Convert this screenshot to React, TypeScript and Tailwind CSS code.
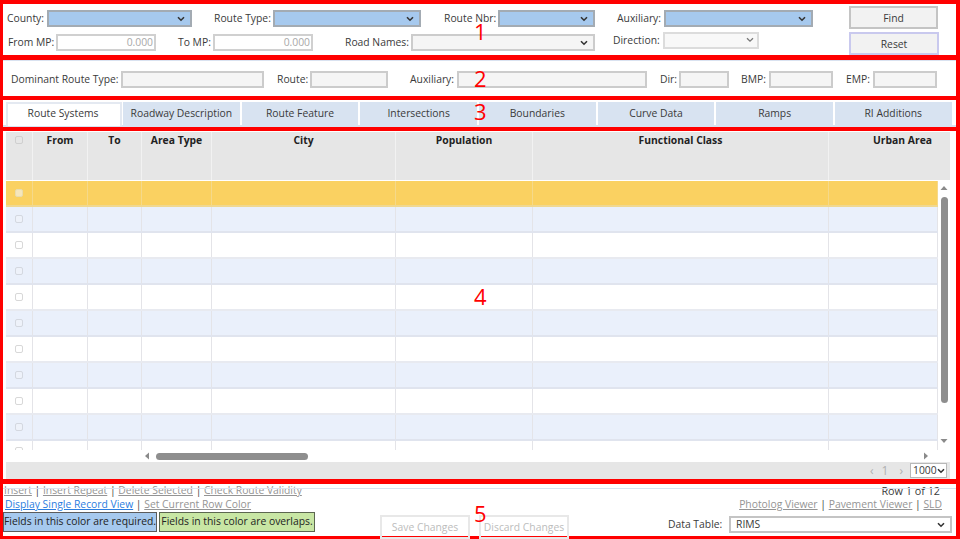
import React from "react";

const selectChevron = (
  <svg width="8" height="6" viewBox="0 0 8 6" className="shrink-0" fill="none" stroke="#333" strokeWidth="1.6">
    <path d="M1 1.2 L4 4.2 L7 1.2" />
  </svg>
);

function Sel({ cls, text }: { cls: string; text?: string }) {
  return (
    <div className={`flex items-center justify-between border px-[5px] ${cls}`}>
      <span>{text}</span>
      {selectChevron}
    </div>
  );
}

function Num({ n, cls }: { n: string; cls: string }) {
  return <span className={`absolute left-[471px] text-[22px] leading-none text-[#ff0000] ${cls}`}>{n}</span>;
}

const req = "border-[#a3abb3] bg-[#a6c9ee] h-[17px] border-2";
const box = "h-[17px] border-2 border-[#cccccc] bg-[#f5f5f5]";
const cols = ["w-[27px]", "w-[55px]", "w-[54px]", "w-[70px]", "w-[184px]", "w-[137px]", "w-[296px]", "w-[109px]"];
const headCols = ["w-[27px]", "w-[55px]", "w-[54px]", "w-[70px]", "w-[184px]", "w-[137px]", "w-[296px]", "w-[148px]"];
const heads = ["", "From", "To", "Area Type", "City", "Population", "Functional Class", "Urban Area"];
const rows = [0, 1, 2, 3, 4, 5, 6, 7, 8, 9];
const tabs = ["Roadway Description", "Route Feature", "Intersections", "Boundaries", "Curve Data", "Ramps", "RI Additions"];

function Check({ cls }: { cls: string }) {
  return <div className={`h-[8px] w-[8px] rounded-[2px] border ${cls}`} />;
}

export default function App() {
  return (
    <div className="flex h-[539px] w-[960px] flex-col overflow-hidden whitespace-nowrap bg-white font-['Open_Sans',sans-serif] text-[10.35px] text-[#3a3a3a]">
      {/* 1 */}
      <section className="relative flex h-[60px] shrink-0 border-t-4 border-r-4 border-b-[5px] border-l-[3px] border-[#ff0000]">
        <div className="flex flex-col">
          <div className="mt-[6px] flex items-center">
            <span className="ml-[4px] w-[40px] pt-[1px]">County:</span>
            <Sel cls={`${req} w-[145px]`} />
            <span className="ml-[22px] w-[59px] pt-[1px]">Route Type:</span>
            <Sel cls={`${req} w-[148px]`} />
            <span className="ml-[23px] w-[54px] pt-[1px]">Route Nbr:</span>
            <Sel cls={`${req} w-[97px]`} />
            <span className="ml-[22px] w-[47px] pt-[1px]">Auxiliary:</span>
            <Sel cls={`${req} w-[149px]`} />
          </div>
          <div className="mt-[7px] flex items-center">
            <span className="ml-[5px] w-[48px]">From MP:</span>
            <div className="flex h-[17px] w-[100px] items-center justify-end border-2 border-[#d0d0d0] px-[1px] text-[#a8a8a8]">0.000</div>
            <span className="ml-[22px] w-[35px]">To MP:</span>
            <div className="flex h-[17px] w-[100px] items-center justify-end border-2 border-[#d0d0d0] px-[1px] text-[#a8a8a8]">0.000</div>
            <span className="ml-[32px] w-[66px]">Road Names:</span>
            <Sel cls={`${box} w-[184px]`} />
            <span className="ml-[18px] -mt-[3px] w-[50px]">Direction:</span>
            <div className="-mt-[5px] flex h-[17px] w-[96px] items-center justify-end border-2 border-[#dcdcdc] bg-[#f8f8f8] pr-[3px]">
              <svg width="8" height="6" viewBox="0 0 8 6" fill="none" stroke="#777" strokeWidth="1.3">
                <path d="M1 1.2 L4 4.2 L7 1.2" />
              </svg>
            </div>
          </div>
        </div>
        <div className="ml-[36px] flex flex-col">
          <button className="mt-[2px] h-[23px] w-[89px] border-2 border-[#c4c4c4] bg-[#f2f2f2] pt-[2px]">Find</button>
          <button className="mt-[3px] h-[24px] w-[90px] border-2 border-[#c9c9ee] bg-[#f2f2f2] pt-[2px]">Reset</button>
        </div>
        <Num n="1" cls="top-[16px]" />
      </section>

      {/* 2 */}
      <section className="relative flex h-[40px] shrink-0 items-center border-r-4 border-b-4 border-l-[3px] border-[#ff0000] pt-[3px]">
        <div className="absolute inset-x-0 top-0 h-[1px] bg-[#d9e2f0]" />
        <span className="ml-[8px] w-[110px] pt-[1px]">Dominant Route Type:</span>
        <div className={`${box} w-[143px]`} />
        <span className="ml-[13px] w-[33px] pt-[1px]">Route:</span>
        <div className={`${box} w-[78px]`} />
        <span className="ml-[22px] w-[47px] pt-[1px]">Auxiliary:</span>
        <div className={`${box} w-[190px]`} />
        <span className="ml-[13px] w-[19px] pt-[1px]">Dir:</span>
        <div className={`${box} w-[50px]`} />
        <span className="ml-[12px] w-[28px] pt-[1px]">BMP:</span>
        <div className={`${box} w-[64px]`} />
        <span className="ml-[13px] w-[27px] pt-[1px]">EMP:</span>
        <div className={`${box} w-[64px]`} />
        <Num n="2" cls="top-[7px]" />
      </section>

      {/* 3 */}
      <section className="relative flex h-[31px] shrink-0 border-r-4 border-b-4 border-l-[3px] border-[#ff0000] pt-[2px]">
        <div className="flex h-[25px] w-full items-stretch gap-[2px] border-b-2 border-[#d8e3f1] pl-[3px]">
          <div className="-mr-[1px] -mb-[1px] flex w-[116px] items-center justify-center border-2 border-b-0 border-[#e4e9f1] bg-white pr-[2px] pb-[2px]">Route Systems</div>
          {tabs.map((t) => (
            <div key={t} className="flex w-[116.67px] items-center justify-center bg-[#d8e3f1]">
              {t}
            </div>
          ))}
        </div>
        <Num n="3" cls="top-[0px]" />
      </section>

      {/* 4 */}
      <section className="relative flex h-[353px] shrink-0 flex-col border-r-4 border-b-[5px] border-l-[3px] border-[#ff0000] pr-[6px] pl-[3px]">
        <div className="flex h-[49px] shrink-0 overflow-hidden border-t border-white bg-[#e6e6e6]">
          {heads.map((h, i) => (
            <div key={i} className={`${headCols[i]} flex shrink-0 justify-center border-r border-[#f2f2f2] pt-[1px] font-bold text-[#222]`}>
              {i === 0 ? <Check cls="mt-[3px] border-[#cfcfcf] bg-[#e6e6e6]" /> : h}
            </div>
          ))}
        </div>
        <div className="flex h-[270px] shrink-0 pt-[1px]">
          <div className="flex h-[269px] w-[932px] shrink-0 flex-col overflow-hidden">
            {rows.map((r) => (
              <div
                key={r}
                className={`flex h-[26px] shrink-0 border-b-2 ${
                  r === 0 ? "border-[#f0d890] bg-[#fad161]" : r % 2 === 1 ? "border-[#e0e4ee] bg-[#eaf0fb]" : "border-[#e8eaf0] bg-white"
                }`}
              >
                {cols.map((c, i) => (
                  <div
                    key={i}
                    className={`${c} flex shrink-0 items-center justify-center border-r ${r === 0 ? "border-[#f5d98a]" : "border-[#e4e4e8]"}`}
                  >
                    {i === 0 && (
                      <Check cls={r === 0 ? "border-[#e8dcae] bg-[#f5e6bc]" : r % 2 === 1 ? "border-[#d4d8e0] bg-[#eef2fa]" : "border-[#d8d8d8] bg-white"} />
                    )}
                  </div>
                ))}
              </div>
            ))}
            <div className="flex h-[9px] shrink-0">
              {cols.map((c, i) => (
                <div key={i} className={`${c} flex shrink-0 justify-center border-r border-[#e4e4e8]`}>
                  {i === 0 && <Check cls="mt-[6px] border-[#d8d8d8] bg-white" />}
                </div>
              ))}
            </div>
          </div>
          <div className="flex w-[12px] shrink-0 flex-col items-center">
            <svg width="8" height="6" viewBox="0 0 8 6" className="mt-[4px]"><path d="M4 1 L7.5 5 L0.5 5 Z" fill="#8a8a8a" /></svg>
            <div className="mt-[6px] h-[206px] w-[7px] rounded-[4px] bg-[#8e8e8e]" />
            <svg width="8" height="6" viewBox="0 0 8 6" className="mt-[35px]"><path d="M4 5 L7.5 1 L0.5 1 Z" fill="#8a8a8a" /></svg>
          </div>
        </div>
        <div className="flex h-[12px] shrink-0 items-center">
          <svg width="6" height="8" viewBox="0 0 6 8" className="ml-[138px]"><path d="M1 4 L5 0.5 L5 7.5 Z" fill="#8a8a8a" /></svg>
          <div className="ml-[6px] h-[7px] w-[152px] rounded-[4px] bg-[#8e8e8e]" />
          <svg width="6" height="8" viewBox="0 0 6 8" className="ml-[615px]"><path d="M5 4 L1 0.5 L1 7.5 Z" fill="#8a8a8a" /></svg>
        </div>
        <div className="flex h-[17px] shrink-0 items-center justify-end bg-[#e6e6e6] pr-[3px] text-[#b0b0b0]">
          <span className="text-[12px]">‹</span>
          <span className="ml-[8px] text-[12px]">1</span>
          <span className="ml-[11px] text-[12px]">›</span>
          <div className="ml-[7px] flex h-[15px] w-[37px] items-center justify-between border border-[#b8b8b8] bg-white px-[2px] text-[#3a3a3a]">
            <span>1000</span>
            {selectChevron}
          </div>
        </div>
        <Num n="4" cls="top-[154px]" />
      </section>

      {/* 5 */}
      <section className="relative flex h-[55px] shrink-0 border-r-4 border-b-[3px] border-l-[3px] border-[#ff0000]">
        <div className="absolute inset-x-0 top-[4px] h-[1px] bg-[#d9e2f0]" />
        <div className="flex w-[377px] shrink-0 flex-col">
          <div className="ml-[1px] h-[14px] leading-[13px] text-[#949494]">
            <span className="underline">Insert</span> <span className="text-[#444]">|</span> <span className="underline">Insert Repeat</span> <span className="text-[#444]">|</span> <span className="underline">Delete Selected</span> <span className="text-[#444]">|</span> <span className="underline">Check Route Validity</span>
          </div>
          <div className="ml-[2px] h-[14px] leading-[13px] text-[#949494]">
            <span className="text-[#2b7de0] underline">Display Single Record View</span> <span className="text-[#444]">|</span> <span className="underline">Set Current Row Color</span>
          </div>
          <div className="flex gap-[2px]">
            <div className="flex h-[20px] w-[154px] items-center justify-center border border-[#5c5c5c] bg-[#a6c9ee] text-[#222]">Fields in this color are required.</div>
            <div className="flex h-[20px] w-[156px] items-center justify-center border border-[#5c6650] bg-[#c8e6a4] text-[#222]">Fields in this color are overlaps.</div>
          </div>
        </div>
        <div className="flex shrink-0 gap-[9px] pt-[31px] text-[#bcbcbc]">
          <div className="flex h-[24px] w-[90px] items-center justify-center border-2 border-[#e8e8e8] pt-[2px]">Save Changes</div>
          <div className="flex h-[24px] w-[90px] items-center justify-center border-2 border-[#e8e8e8] pt-[2px]">Discard Changes</div>
        </div>
        <div className="flex flex-1 flex-col items-end">
          <div className="mr-[16px] h-[14px] text-[10.8px] leading-[13px]">Row 1 of 12</div>
          <div className="mr-[14px] h-[14px] leading-[13px] text-[#949494]">
            <span className="underline">Photolog Viewer</span> <span className="text-[#444]">|</span> <span className="underline">Pavement Viewer</span> <span className="text-[#444]">|</span> <span className="underline">SLD</span>
          </div>
          <div className="mr-[4px] mt-[4px] flex items-center">
            <span className="w-[61px]">Data Table:</span>
            <Sel cls="h-[17px] w-[223px] border-2 border-[#c4c4c4] bg-white" text="RIMS" />
          </div>
        </div>
        <Num n="5" cls="top-[18px]" />
      </section>
    </div>
  );
}
